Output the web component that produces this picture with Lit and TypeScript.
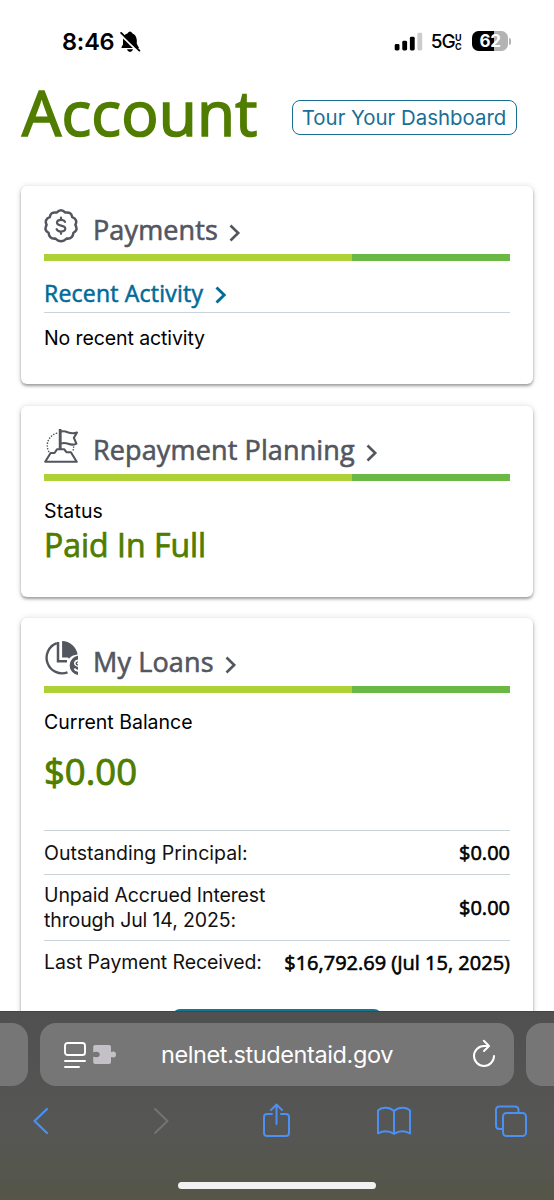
import { LitElement, html, css, svg } from "lit";
import { customElement, property } from "lit/decorators.js";

const payments = svg`
  <g fill="none" stroke="#53565f" stroke-width="2.5" stroke-linejoin="round" stroke-linecap="round">
    <path d="M12.6 3.6Q17 -1 21.4 3.6Q27.6 2.6 28.2 8.2Q34 10.400 31.400 15.900Q34.400 21.400 29.400 23.800Q28.800 30 22.600 29.600Q17 35 11.400 29.600Q5.200 30 4.600 23.800Q-0.400 21.400 2.600 15.900Q0 10.400 5.800 8.200Q6.400 2.600 12.600 3.600Z"/>
    <path d="M21 12.9C20.300 11.400 18.900 10.800 17 10.800C14.700 10.800 13 11.900 13 13.700C13 17.700 21.300 15.600 21.300 19.600C21.300 21.400 19.400 22.600 17 22.600C14.900 22.600 13.200 21.800 12.600 20.200M17 8.600V10.800M17 22.600V24.800" stroke-width="2.2"/>
  </g>`;

const planning = svg`
  <g fill="none" stroke="#53565f" stroke-width="2.100" stroke-linejoin="round" stroke-linecap="round">
    <path d="M1.200 32.800L6.600 24H10.500L13 20.300H20.300L22.400 23.200H26.900L32.700 32.800Z"/>
    <path d="M16.200 1V19.500" stroke-width="2.900"/>
    <path d="M17 2.600Q20.300 1.700 23.600 3.200Q28.600 5 33 3.500L29.900 8.800L32.400 14.600Q28.700 16.600 24.300 14.800Q20.500 13.500 17 14.400"/>
    <path d="M12.500 4.200C4 7.200 1.300 15.400 4.700 22.500M29.600 18Q29.600 20.400 28.400 22.700" stroke-dasharray="0.1 2.700" stroke-width="1.600"/>
  </g>`;

const loans = svg`
  <path fill="#53565f" d="M18.100 0A16 16 0 0 1 33.600 13.400Q27.800 13.800 25 17.800L24 16.400H18.100Z"/>
  <path fill="none" stroke="#53565f" stroke-width="2.400" d="M12.800 2.200A15.200 15.200 0 1 0 23.500 31.400"/>
  <path fill="none" stroke="#53565f" stroke-width="2.500" d="M14 1V20.300H23"/>
  <path fill="#53565f" d="M34 14.800A9.700 9.700 0 0 0 34 34V30.800Q30.600 30.400 29.600 28L31.200 26.900Q32 28.400 34 28.700V25.900Q30 25.200 30 22.300Q30 19.200 34 18.500Z"/>
  <path fill="none" stroke="#53565f" stroke-width="1.400" d="M34 20.900Q32.200 21.200 32.200 22.500Q32.200 23.800 34 24.100"/>`;

@customElement("card-title")
export class CardTitle extends LitElement {
  @property() label = "";
  @property({ attribute: false }) icon: unknown;
  static styles = css`
    :host { display: block; }
    .row { display: flex; height: 45px; }
    .icon { width: 34px; height: 34px; flex: none; }
    .label { margin: 0 0 0 15px; padding-top: 3px; color: #53565f; font: 400 27px/36px "Open Sans", sans-serif; letter-spacing: 0.13px; -webkit-text-stroke: 0.6px #53565f; white-space: nowrap; }
    .chev { width: 12px; height: 18px; margin: 15px 0 0 11px; }
    .bar { height: 7px; background: linear-gradient(to right, #add136 66.1%, #6cb844 66.1%); }
  `;
  render() {
    return html`
      <div class="row">
        <svg class="icon" viewBox="0 0 34 34">${this.icon}</svg>
        <h2 class="label">${this.label}</h2>
        <svg class="chev" viewBox="0 0 12 18"><path d="M1.500 1.500L9.200 9L1.500 16.500" fill="none" stroke="#53565f" stroke-width="2.600"/></svg>
      </div>
      <div class="bar"></div>`;
  }
}

@customElement("app-root")
export class AppRoot extends LitElement {
  static styles = css`
    :host { display: block; }
    * { box-sizing: border-box; }
    .page { width: 554px; height: 1200px; overflow: hidden; display: flex; flex-direction: column; background: #fff; color: #111; font-family: Inter, sans-serif; white-space: nowrap; }
    .status { height: 82px; flex: none; display: flex; align-items: flex-start; padding: 27px 43px 0 62px; color: #000; }
    .time { width: 57px; font-size: 23.5px; line-height: 29px; font-weight: 600; letter-spacing: -0.2px; }
    .bell { width: 22px; height: 22px; margin-top: 4px; }
    .grow { flex: 1; }
    .gap { width: 9px; }
    .signal { width: 29px; height: 19px; margin-top: 5px; }
    .net { font-size: 19px; line-height: 30px; font-weight: 500; margin-left: 8px; letter-spacing: -0.8px; }
    .uc { display: grid; font-size: 9px; line-height: 9px; font-weight: 700; margin: 6px 0 0 0; width: 8px; }
    .battery { display: flex; align-items: center; margin-top: 4px; }
    .cell { width: 36px; height: 20px; border-radius: 6.5px; color: #fff; font-size: 17px; line-height: 20px; font-weight: 700; text-align: center; letter-spacing: -0.3px; background: linear-gradient(to right, #000 62%, #b3b3b3 62%); }
    .nub { width: 2px; height: 7px; border-radius: 0 2px 2px 0; background: #b3b3b3; margin-left: 1px; }
    .scroll { flex: none; height: 929px; }
    .head { height: 104px; flex: none; display: flex; align-items: flex-start; padding: 0 37px 0 22px; justify-content: space-between; }
    .title { margin: -10px 0 0; color: #507d00; font: 400 62px/80px "Open Sans", sans-serif; letter-spacing: 0.2px; -webkit-text-stroke: 1.7px #507d00; }
    .tour { width: 225px; height: 35px; margin-top: 18px; border: 1.5px solid #176f96; border-radius: 8px; background: #fff; color: #176f96; font: 400 20.4px/31px Inter, sans-serif; padding: 0 1px 0 0; text-align: center; white-space: nowrap; }
    .cards { height: 829px; overflow: hidden; display: flex; flex-direction: column; gap: 21.5px; padding: 4px 21px 0; margin-top: -4px; }
    .card { flex: none; border-radius: 6px; background: #fff; box-shadow: 0 2px 3px rgba(0,0,0,.35), 0 0 7px rgba(0,0,0,.12); padding: 23px 23px 0; }
    .c1 { height: 198px; } .c2 { height: 191px; } .c3 { height: 460px; }
    .link { display: flex; height: 52px; padding-top: 17px; color: #006b99; font: 400 23px/30px "Open Sans", sans-serif; letter-spacing: 0.22px; -webkit-text-stroke: 0.55px #006b99; border-bottom: 1.5px solid #cad4da; }
    .link svg { width: 12px; height: 18px; margin: 8px 0 0 12px; }
    .copy { font-size: 19.5px; line-height: 26px; color: #000; }
    .none { padding-top: 12px; letter-spacing: -0.1px; }
    .state { padding-top: 17px; letter-spacing: 0.15px; }
    .paid { color: #507d00; font: 400 32px/42px "Open Sans", sans-serif; -webkit-text-stroke: 0.75px #507d00; }
    .current { padding-top: 16px; }
    .amount { color: #507d00; font: 400 36.500px/50px "Open Sans", sans-serif; -webkit-text-stroke: 0.9px #507d00; padding-top: 11px; height: 95px; }
    .line { display: flex; justify-content: space-between; align-items: center; border-top: 1.5px solid #cad4d6; font-size: 19.5px; line-height: 25px; letter-spacing: -0.12px; color: #111; }
    .principal { letter-spacing: 0.02px; padding-top: 1px; }
    .short { height: 44px; } .tall { height: 66px; }
    .value { font: 400 20px/26px "Open Sans", sans-serif; letter-spacing: 0; -webkit-text-stroke: 0.6px #000; color: #000; }
    .more { width: 210px; height: 40px; margin: 25px auto 0; border-radius: 8px; background: #147891; }
    .safari { position: relative; flex: none; height: 189px; background: linear-gradient(to bottom, #505050, #565655 60%, #555648); border-top: 1px solid #444; display: flex; flex-direction: column; }
    .tabs { height: 75px; display: flex; gap: 12px; padding-top: 11px; }
    .tab { height: 63px; background: #767677; width: 28px; flex: none; }
    .left { border-radius: 0 16px 16px 0; } .right { border-radius: 16px 0 0 16px; }
    .mid { width: 474px; border-radius: 16px; display: flex; align-items: center; padding: 0 19px 0 24px; color: #fff; }
    .reader { width: 22px; height: 26px; } .puzzle { width: 23px; height: 19px; margin-left: 7px; }
    .url { flex: 1; font-size: 23.5px; line-height: 30px; padding-left: 45px; letter-spacing: -0.4px; }
    .reload { width: 22px; height: 28px; margin-top: -4px; }
    .tools { height: 60px; display: flex; justify-content: space-between; align-items: flex-start; padding: 15px 25px 0 23px; }
    .tools svg { width: 36px; height: 38px; display: block; }
    .home { width: 198px; height: 7px; border-radius: 4px; background: #f1f1f1; margin: 35px auto 0; }
  `;

  render() {
    return html`
      <div class="page">
        <div class="status">
          <span class="time">8:46</span>
          <svg class="bell" viewBox="0 0 22 22">
            <path d="M2.300 17Q2.700 15 4 13.500V9Q4.400 3.800 8.400 2.600Q11 -1.500 13.600 2.600Q17.200 4 17.800 9V12.800L20 17ZM8 18.300H14Q13.500 21 11 21Q8.500 21 8 18.300Z"/>
            <path d="M0.800 3L18.800 20.500" stroke="#fff" stroke-width="1.800"/>
            <path d="M2.100 1.900L20.400 19.600" stroke="#000" stroke-width="1.900" stroke-linecap="round"/>
          </svg>
          <span class="grow"></span>
          <svg class="signal" viewBox="0 0 29 19">
            <rect x="0.700" y="12" width="4.800" height="6.500" rx="1.400"/><rect x="8.300" y="8.800" width="4.800" height="9.700" rx="1.400"/>
            <rect x="15.900" y="4.800" width="4.800" height="13.700" rx="1.400"/><rect x="23.400" y="0.700" width="4.800" height="17.800" rx="1.400" fill="#ccc"/>
          </svg>
          <span class="net">5G</span><span class="uc"><span>U</span><span>C</span></span>
          <span class="gap"></span>
          <span class="battery"><span class="cell">62</span><span class="nub"></span></span>
        </div>
        <div class="scroll">
          <div class="head">
            <h1 class="title">Account</h1>
            <button class="tour">Tour Your Dashboard</button>
          </div>
          <div class="cards">
            <section class="card c1">
              <card-title label="Payments" .icon=${payments}></card-title>
              <div class="link"><span>Recent Activity</span><svg viewBox="0 0 12 18"><path d="M1.500 1.500L9.200 9L1.500 16.500" fill="none" stroke="#006b99" stroke-width="2.900"/></svg></div>
              <div class="copy none">No recent activity</div>
            </section>
            <section class="card c2">
              <card-title label="Repayment Planning" .icon=${planning}></card-title>
              <div class="copy state">Status</div>
              <div class="paid">Paid In Full</div>
            </section>
            <section class="card c3">
              <card-title label="My Loans" .icon=${loans}></card-title>
              <div class="copy current">Current Balance</div>
              <div class="amount">$0.00</div>
              <div class="line short principal"><span>Outstanding Principal:</span><span class="value">$0.00</span></div>
              <div class="line tall"><span>Unpaid Accrued Interest<br>through Jul 14, 2025:</span><span class="value">$0.00</span></div>
              <div class="line short"><span>Last Payment Received:</span><span class="value">$16,792.69 (Jul 15, 2025)</span></div>
              <div class="more"></div>
            </section>
          </div>
        </div>
        <div class="safari">
          <div class="tabs">
            <div class="tab left"></div>
            <div class="tab mid">
              <svg class="reader" viewBox="0 0 22 26" fill="none" stroke="#fff" stroke-width="1.900" stroke-linecap="round"><rect x="1" y="1" width="20" height="12" rx="2.600"/><path d="M1 19H21M1 25H15"/></svg>
              <svg class="puzzle" viewBox="0 0 23 19"><path fill="#c3c0c8" d="M2.200 0H16Q18 0 18 2V7Q23 5.500 23 9.500Q23 13.500 18 12V17Q18 19 16 19H2.200Q.2 19 .2 17V11.800Q6.700 13.300 6.700 9.500Q6.700 5.800 .2 7.200V2Q.2 0 2.200 0Z"/></svg>
              <span class="url">nelnet.studentaid.gov</span>
              <svg class="reload" viewBox="0 0 22 28" fill="none" stroke="#fff" stroke-width="2" stroke-linecap="round" stroke-linejoin="round"><path d="M15 7H11A10 10 0 1 0 21 17M10.800 1.800L16 7L11 12"/></svg>
            </div>
            <div class="tab right"></div>
          </div>
          <div class="tools">
            <svg viewBox="0 0 36 38" fill="none" stroke="#4a90f5" stroke-width="2.200" stroke-linecap="round" stroke-linejoin="round"><path d="M24 7L11.500 19L24 31"/></svg>
            <svg viewBox="0 0 36 38" fill="none" stroke="#747474" stroke-width="2" stroke-linecap="round" stroke-linejoin="round"><path d="M14 7L26.500 19L14 31"/></svg>
            <svg viewBox="-3.500 0 36 38" fill="none" stroke="#4a90f5" stroke-width="2" stroke-linecap="round" stroke-linejoin="round"><path d="M10.500 12H5.500Q2.500 12 2.500 15V31Q2.500 34 5.500 34H24.500Q27.500 34 27.500 31V15Q27.500 12 24.500 12H19.500M15 22V3M9.500 8L15 2.500L20.500 8"/></svg>
            <svg viewBox="0 0 36 38" fill="none" stroke="#4a90f5" stroke-width="2" stroke-linecap="round" stroke-linejoin="round"><path d="M18 9Q14 5.500 9 5.800Q4.500 6 2 8.500V31.500Q10 27 18 31.800Q26 27 34 31.500V8.500Q31.500 6 27 5.800Q22 5.500 18 9V31.800"/></svg>
            <svg viewBox="-2 0 36 38" fill="none" stroke="#4a90f5" stroke-width="2" stroke-linecap="round" stroke-linejoin="round"><rect x="8" y="11" width="23" height="23" rx="3.500"/><path d="M8 27H4.500Q1 27 1 23.500V8Q1 4.500 4.500 4.500H20Q23.500 4.500 23.500 8V11"/></svg>
          </div>
          <div class="home"></div>
        </div>
      </div>`;
  }
}
